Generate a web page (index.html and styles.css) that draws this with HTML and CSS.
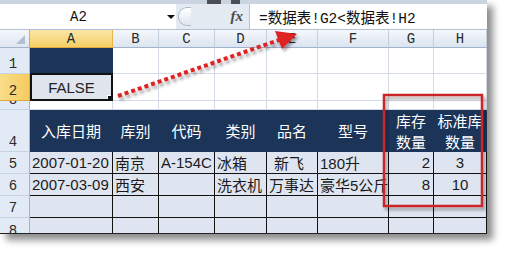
FILE: index.html
```html
<!DOCTYPE html>
<html lang="zh-CN">
<head>
    <meta charset="UTF-8">
    <title>数据表</title>
    <link rel="stylesheet" href="styles.css">
</head>
<body>
    <div class="window">
        <div class="toolbar"><span class="tb-icon"></span><span class="tb-icon small"></span></div>
        <div class="formula-bar">
            <div class="name-box"><span class="ref">A2</span><span class="dropdown"></span></div>
            <div class="splitter"></div>
            <div class="fx">fx</div>
            <div class="formula">=数据表!G2&lt;数据表!H2</div>
        </div>
        <div class="grid">
            <!-- column headers -->
            <div class="c corner"><span class="tri"></span></div>
            <div class="c ch sel">A</div>
            <div class="c ch">B</div>
            <div class="c ch">C</div>
            <div class="c ch">D</div>
            <div class="c ch">E</div>
            <div class="c ch">F</div>
            <div class="c ch">G</div>
            <div class="c ch">H</div>
            <!-- row 1 -->
            <div class="c rh">1</div>
            <div class="c navy"></div>
            <div class="c"></div><div class="c"></div><div class="c"></div><div class="c"></div>
            <div class="c"></div><div class="c"></div><div class="c"></div>
            <!-- row 2 -->
            <div class="c rh sel">2</div>
            <div class="c active">FALSE<span class="handle"></span></div>
            <div class="c"></div><div class="c"></div><div class="c"></div><div class="c"></div>
            <div class="c"></div><div class="c"></div><div class="c"></div>
            <!-- row 3 -->
            <div class="c rh">3</div>
            <div class="c"></div><div class="c"></div><div class="c"></div><div class="c"></div>
            <div class="c"></div><div class="c"></div><div class="c"></div><div class="c"></div>
            <!-- row 4: table header -->
            <div class="c rh">4</div>
            <div class="c th">入库日期</div>
            <div class="c th">库别</div>
            <div class="c th">代码</div>
            <div class="c th">类别</div>
            <div class="c th">品名</div>
            <div class="c th">型号</div>
            <div class="c th">库存<br>数量</div>
            <div class="c th">标准库<br>数量</div>
            <!-- row 5 -->
            <div class="c rh">5</div>
            <div class="c d">2007-01-20</div>
            <div class="c d">南京</div>
            <div class="c d">A-154C</div>
            <div class="c d">冰箱</div>
            <div class="c d indent">新飞</div>
            <div class="c d">180升</div>
            <div class="c d num">2</div>
            <div class="c d mid">3</div>
            <!-- row 6 -->
            <div class="c rh">6</div>
            <div class="c d">2007-03-09</div>
            <div class="c d">西安</div>
            <div class="c d"></div>
            <div class="c d">洗衣机</div>
            <div class="c d">万事达</div>
            <div class="c d">豪华5公斤</div>
            <div class="c d num">8</div>
            <div class="c d mid">10</div>
            <!-- row 7 -->
            <div class="c rh">7</div>
            <div class="c d"></div><div class="c d"></div><div class="c d"></div><div class="c d"></div>
            <div class="c d"></div><div class="c d"></div><div class="c d"></div><div class="c d"></div>
            <!-- row 8 -->
            <div class="c rh cut">8</div>
            <div class="c d"></div><div class="c d"></div><div class="c d"></div><div class="c d"></div>
            <div class="c d"></div><div class="c d"></div><div class="c d"></div><div class="c d"></div>
        </div>
        <svg class="marks" width="487" height="234" viewBox="0 0 487 234">
            <defs>
                <filter id="sh" x="-20%" y="-20%" width="140%" height="160%">
                    <feDropShadow dx="2" dy="3" stdDeviation="1.6" flood-color="#000" flood-opacity="0.35"/>
                </filter>
            </defs>
            <line x1="265" y1="29" x2="423" y2="29" stroke="#df2420" stroke-width="3" filter="url(#sh)"/>
            <line x1="118" y1="96" x2="279" y2="40" stroke="#df2420" stroke-width="4" stroke-dasharray="4 3" filter="url(#sh)"/>
            <polygon points="275,31 297,34 282,49" fill="#df2420" filter="url(#sh)"/>
            <rect x="384" y="95" width="98" height="111" fill="none" stroke="#c9262b" stroke-width="2.5" filter="url(#sh)"/>
        </svg>
    </div>
</body>
</html>
```

FILE: styles.css
```css
body {
    margin: 0;
    width: 511px;
    height: 255px;
    background-color: #ffffff;
    font-family: "Liberation Sans", "Noto Sans CJK SC", sans-serif;
    overflow: hidden;
}
.window {
    position: relative;
    width: 487px;
    height: 234px;
    box-sizing: border-box;
    border-bottom: 1px solid #222;
    overflow: hidden;
    box-shadow: 6px 6px 7px rgba(0, 0, 0, 0.45);
    background-color: #ffffff;
}
.toolbar {
    height: 4px;
    background-color: #cbd5e1;
    display: flex;
    gap: 10px;
    padding-left: 207px;
}
.tb-icon {
    width: 14px;
    background-color: #4a4f57;
}
.tb-icon.small {
    width: 9px;
}
.formula-bar {
    display: flex;
    height: 25px;
    border-bottom: 1px solid #b3c0d1;
    background-color: #e4eaf2;
}
.name-box {
    width: 176px;
    display: flex;
    align-items: center;
    background-color: #ffffff;
    font-family: "Liberation Mono", monospace;
    font-size: 14px;
    color: #111;
}
.name-box .ref {
    margin-left: 70px;
}
.dropdown {
    margin-left: 80px;
    width: 0;
    height: 0;
    border-left: 4px solid transparent;
    border-right: 4px solid transparent;
    border-top: 4px solid #111;
}
.splitter {
    align-self: center;
    margin-left: 2px;
    width: 12px;
    height: 17px;
    border: 1px solid #aebbcb;
    border-right: none;
    border-radius: 9px 0 0 9px;
    background: linear-gradient(#ffffff, #dfe6ef);
}
.fx {
    width: 52px;
    display: flex;
    align-items: center;
    justify-content: flex-end;
    padding-right: 6px;
    font-family: "Liberation Serif", serif;
    font-style: italic;
    font-weight: bold;
    font-size: 15px;
    color: #4a4a4a;
}
.formula {
    flex: 1;
    display: flex;
    align-items: center;
    padding-left: 9px;
    background-color: #ffffff;
    border-left: 1px solid #b8c4d3;
    font-family: "Liberation Mono", "Noto Sans CJK SC", monospace;
    font-size: 14.5px;
    color: #111;
    white-space: nowrap;
}
.grid {
    display: grid;
    grid-template-columns: 30px 83px 46px 56px 52px 51px 71px 45px 53px;
    grid-template-rows: 18px 26px 27px 9px 42px 22px 22px 22px 22px;
}
.c {
    box-sizing: border-box;
    border-right: 1px solid #d4dbe6;
    border-bottom: 1px solid #d4dbe6;
    overflow: hidden;
    white-space: nowrap;
    display: flex;
    align-items: center;
    font-size: 15px;
    color: #1a1a1a;
}
.corner {
    background: linear-gradient(#f4f7fb, #dfe7f1);
    border-right: 1px solid #9fb4cc;
    border-bottom: 1px solid #9fb4cc;
    justify-content: flex-end;
    align-items: flex-end;
    padding: 0 4px 3px 0;
}
.corner .tri {
    width: 9px;
    height: 9px;
    background-color: #b4c0d0;
    clip-path: polygon(100% 0, 100% 100%, 0 100%);
}
.ch {
    justify-content: center;
    background: linear-gradient(#f5f8fc, #dbe4f0);
    border-right: 1px solid #c2cfdf;
    border-bottom: 1px solid #9fb4cc;
    font-family: "Liberation Mono", monospace;
    font-size: 14px;
    color: #2a2a2a;
}
.ch.sel {
    background: linear-gradient(#fbe7a6, #f6cf66);
    border-right-color: #e9b44c;
    border-bottom-color: #e3a83c;
}
.rh {
    justify-content: center;
    align-items: flex-end;
    padding: 0 3px 0 0;
    background-color: #e2eaf5;
    border-right: 1px solid #9fb4cc;
    border-bottom: 1px solid #c6d3e3;
    font-family: "Liberation Mono", monospace;
    font-size: 14px;
    line-height: 18px;
    color: #2a2a2a;
}
.rh.sel {
    background: linear-gradient(90deg, #f9dd8a, #f5cb5e);
    border-bottom-color: #e3a83c;
}
.rh.cut {
    align-items: flex-start;
    padding-top: 4px;
}
.navy {
    background-color: #1b3458;
    border-color: #1b3458;
}
.active {
    position: relative;
    justify-content: center;
    background-color: #dfe4ed;
    border: 2px solid #111;
    margin: -1px 0 0 0;
    color: #222;
}
.handle {
    position: absolute;
    right: -3px;
    bottom: -3px;
    width: 5px;
    height: 5px;
    background-color: #111;
    border: 1px solid #fff;
}
.th {
    justify-content: center;
    text-align: center;
    background-color: #1b3458;
    border-color: #1b3458;
    color: #ffffff;
    font-family: "Noto Sans CJK SC", sans-serif;
    line-height: 21px;
}
.d {
    padding-left: 2px;
    background-color: #dfe5f0;
    border-right: 1px solid #111;
    border-bottom: 1px solid #111;
}
.d.indent {
    padding-left: 7px;
}
.d.num {
    justify-content: flex-end;
    padding: 0 3px 0 0;
}
.d.mid {
    justify-content: center;
    padding: 0;
}
.marks {
    position: absolute;
    top: 0;
    left: 0;
    overflow: visible;
}
```
